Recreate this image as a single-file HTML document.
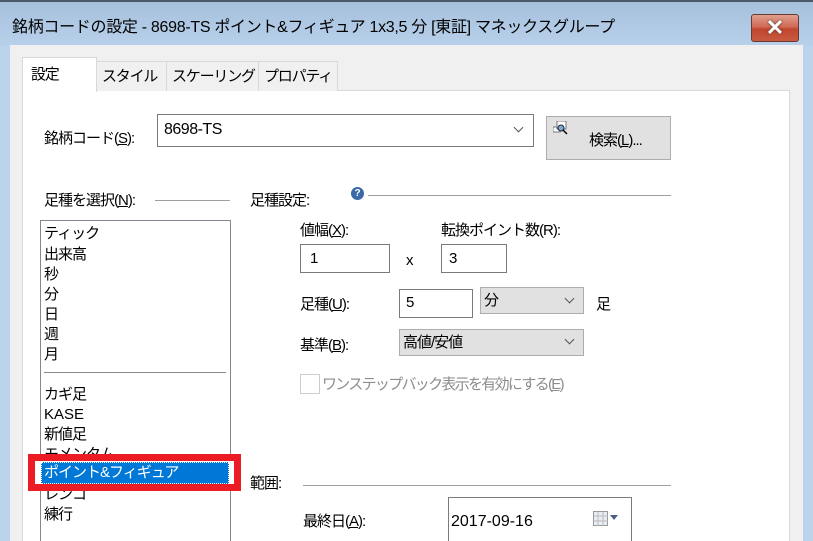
<!DOCTYPE html>
<html><head><meta charset="utf-8"><style>
*{box-sizing:border-box;margin:0;padding:0}
html,body{width:813px;height:541px;overflow:hidden}
body{position:relative;background:#bcd3ec;font-family:"Liberation Sans","Noto Sans CJK JP",sans-serif;font-size:15px;color:#000}
.a{position:absolute;white-space:nowrap;line-height:24px;letter-spacing:-1px}
.title{position:absolute;left:0;top:0;width:813px;height:46px;background:linear-gradient(#a6c0dc,#b8d0ea);border-top:2px solid #4a5a6a}
.u{text-decoration:underline}
.tab{position:absolute;background:#f0f0f0;border:1px solid #d9d9d9;border-bottom:none;padding-left:5px;line-height:30px;white-space:nowrap;letter-spacing:-1.2px;font-size:15px}
.box{position:absolute;background:#fff;border:1px solid #7a7a7a}
.cb{position:absolute;background:#e1e1e1;border:1px solid #adadad}
.chev{position:absolute;width:7px;height:7px;border-right:1px solid #555;border-bottom:1px solid #555;transform:rotate(45deg)}
.line{position:absolute;height:1px;background:#a0a0a0}
</style></head><body>
<div class="title"></div>
<div class="a" style="left:12px;top:16px;font-size:16px;letter-spacing:-0.3px">銘柄コードの設定 - 8698-TS ポイント&amp;フィギュア 1x3,5 分 [東証] マネックスグループ</div>
<div style="position:absolute;left:751px;top:14px;width:48px;height:28px;border:1px solid #6a3a30;border-radius:3px;background:linear-gradient(#e0a090 0%,#d06a55 45%,#c0452e 55%,#c85a40 100%)"></div>
<div class="a" style="left:763px;top:14px;width:24px;text-align:center;color:#fff;font-weight:bold;font-size:22px;line-height:28px;letter-spacing:0;text-shadow:0 0 2px #333">✕</div>
<div style="position:absolute;left:10px;top:45px;width:793px;height:496px;background:#f0f0f0"></div>
<div style="position:absolute;left:22px;top:90px;width:768px;height:460px;background:#fff;border:1px solid #d9d9d9"></div>
<div class="tab" style="left:96px;top:61px;width:71px;height:30px">スタイル</div>
<div class="tab" style="left:166px;top:61px;width:93px;height:30px">スケーリング</div>
<div class="tab" style="left:258px;top:61px;width:80px;height:30px">プロパティ</div>
<div class="tab" style="left:22px;top:57px;width:75px;height:35px;background:#fff;line-height:34px;padding-left:8px">設定</div>
<div class="a" style="left:44px;top:127px">銘柄コード(<span class="u">S</span>):</div>
<div class="box" style="left:157px;top:114px;width:377px;height:33px"></div>
<div class="a" style="left:164px;top:118px;font-size:16px;letter-spacing:-0.5px">8698-TS</div>
<div class="chev" style="left:515px;top:124px"></div>
<div class="cb" style="left:546px;top:116px;width:125px;height:44px"></div>
<svg style="position:absolute;left:553px;top:121px" width="16" height="14"><rect x="0" y="6" width="7" height="5" fill="#fff" stroke="#777"/><rect x="4" y="0" width="9" height="8" fill="#fff" stroke="#777"/><circle cx="8" cy="7" r="3" fill="#7aa6d8" stroke="#223"/><line x1="10" y1="9" x2="14" y2="13" stroke="#000" stroke-width="1.5"/></svg>
<div class="a" style="left:589px;top:129px">検索(<span class="u">L</span>)...</div>
<div class="a" style="left:44px;top:189px">足種を選択(<span class="u">N</span>):</div>
<div class="line" style="left:155px;top:200px;width:75px"></div>
<div class="a" style="left:250px;top:189px">足種設定:</div>
<div style="position:absolute;left:351px;top:187px;width:13px;height:13px;border-radius:50%;background:#3a6aa8;color:#fff;font-size:10px;line-height:13px;text-align:center;font-weight:bold">?</div>
<div class="line" style="left:368px;top:195px;width:303px"></div>
<div class="box" style="left:40px;top:220px;width:191px;height:340px;border-color:#828790"></div>
<div class="a" style="left:44px;top:222px">ティック</div>
<div class="a" style="left:44px;top:243px">出来高</div>
<div class="a" style="left:44px;top:263px">秒</div>
<div class="a" style="left:44px;top:283px">分</div>
<div class="a" style="left:44px;top:303px">日</div>
<div class="a" style="left:44px;top:323px">週</div>
<div class="a" style="left:44px;top:343px">月</div>
<div class="line" style="left:44px;top:372px;width:182px;background:#888"></div>
<div class="a" style="left:44px;top:383px">カギ足</div>
<div class="a" style="left:44px;top:403px;letter-spacing:0">KASE</div>
<div class="a" style="left:44px;top:423px">新値足</div>
<div class="a" style="left:44px;top:443px">モメンタム</div>
<div class="a" style="left:44px;top:483px">レンコ</div>
<div class="a" style="left:44px;top:503px">練行</div>
<div style="position:absolute;left:28px;top:454px;width:213px;height:37px;border:7px solid #ec1c24;background:#fff"></div>
<div style="position:absolute;left:41px;top:462px;width:188px;height:22px;background:#0078d7;border:1px dotted #fff"></div>
<div class="a" style="left:44px;top:461px;color:#fff">ポイント&amp;フィギュア</div>
<div class="a" style="left:300px;top:219px">値幅(<span class="u">X</span>):</div>
<div class="box" style="left:300px;top:244px;width:90px;height:29px"></div>
<div class="a" style="left:310px;top:247px">1</div>
<div class="a" style="left:406px;top:249px">x</div>
<div class="a" style="left:441px;top:219px">転換ポイント数(R):</div>
<div class="box" style="left:441px;top:244px;width:66px;height:29px"></div>
<div class="a" style="left:449px;top:247px">3</div>
<div class="a" style="left:300px;top:293px">足種(<span class="u">U</span>):</div>
<div class="box" style="left:399px;top:289px;width:74px;height:29px"></div>
<div class="a" style="left:406px;top:291px">5</div>
<div class="cb" style="left:480px;top:287px;width:104px;height:27px"></div>
<div class="a" style="left:484px;top:289px">分</div>
<div class="chev" style="left:566px;top:295px"></div>
<div class="a" style="left:596px;top:293px">足</div>
<div class="a" style="left:300px;top:334px">基準(<span class="u">B</span>):</div>
<div class="cb" style="left:399px;top:329px;width:185px;height:27px"></div>
<div class="a" style="left:403px;top:331px">高値/安値</div>
<div class="chev" style="left:566px;top:336px"></div>
<div style="position:absolute;left:300px;top:374px;width:20px;height:20px;border:1px solid #ccc;background:#fff"></div>
<div class="a" style="left:322px;top:373px;color:#8d8d8d;letter-spacing:-1.7px">ワンステップバック表示を有効にする(<span class="u">E</span>)</div>
<div class="a" style="left:250px;top:472px">範囲:</div>
<div class="line" style="left:303px;top:485px;width:368px"></div>
<div class="a" style="left:303px;top:510px">最終日(<span class="u">A</span>):</div>
<div class="box" style="left:448px;top:497px;width:184px;height:60px"></div>
<div class="a" style="left:451px;top:510px;font-size:16px;letter-spacing:0">2017-09-16</div>
<svg style="position:absolute;left:593px;top:511px" width="30" height="16"><rect x="0.5" y="0.5" width="14" height="14" fill="#e8eef5" stroke="#999"/><path d="M5 1v14M10 1v14M1 5h14M1 10h14" stroke="#bbb"/><path d="M17 4h8l-4 5z" fill="#4a5f80"/></svg>
</body></html>
